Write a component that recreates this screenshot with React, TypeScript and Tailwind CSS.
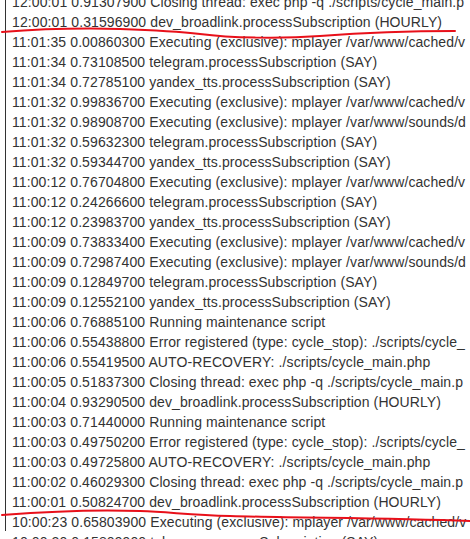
import React from "react";

const rows: string[] = [
  "12:00:01 0.91307900 Closing thread: exec php -q ./scripts/cycle_main.p",
  "12:00:01 0.31596900 dev_broadlink.processSubscription (HOURLY)",
  "11:01:35 0.00860300 Executing (exclusive): mplayer /var/www/cached/v",
  "11:01:34 0.73108500 telegram.processSubscription (SAY)",
  "11:01:34 0.72785100 yandex_tts.processSubscription (SAY)",
  "11:01:32 0.99836700 Executing (exclusive): mplayer /var/www/cached/v",
  "11:01:32 0.98908700 Executing (exclusive): mplayer /var/www/sounds/d",
  "11:01:32 0.59632300 telegram.processSubscription (SAY)",
  "11:01:32 0.59344700 yandex_tts.processSubscription (SAY)",
  "11:00:12 0.76704800 Executing (exclusive): mplayer /var/www/cached/v",
  "11:00:12 0.24266600 telegram.processSubscription (SAY)",
  "11:00:12 0.23983700 yandex_tts.processSubscription (SAY)",
  "11:00:09 0.73833400 Executing (exclusive): mplayer /var/www/cached/v",
  "11:00:09 0.72987400 Executing (exclusive): mplayer /var/www/sounds/d",
  "11:00:09 0.12849700 telegram.processSubscription (SAY)",
  "11:00:09 0.12552100 yandex_tts.processSubscription (SAY)",
  "11:00:06 0.76885100 Running maintenance script",
  "11:00:06 0.55438800 Error registered (type: cycle_stop): ./scripts/cycle_",
  "11:00:06 0.55419500 AUTO-RECOVERY: ./scripts/cycle_main.php",
  "11:00:05 0.51837300 Closing thread: exec php -q ./scripts/cycle_main.p",
  "11:00:04 0.93290500 dev_broadlink.processSubscription (HOURLY)",
  "11:00:03 0.71440000 Running maintenance script",
  "11:00:03 0.49750200 Error registered (type: cycle_stop): ./scripts/cycle_",
  "11:00:03 0.49725800 AUTO-RECOVERY: ./scripts/cycle_main.php",
  "11:00:02 0.46029300 Closing thread: exec php -q ./scripts/cycle_main.p",
  "11:00:01 0.50824700 dev_broadlink.processSubscription (HOURLY)",
  "10:00:23 0.65803900 Executing (exclusive): mplayer /var/www/cached/v",
  "10:00:20 0.15809900 telegram.processSubscription (SAY)",
];

export default function App() {
  return (
    <div className="relative w-[470px] h-[539px] overflow-hidden bg-white">
      <div className="ml-[5px] border-l border-[#333] h-full">
        <div className="-mt-[8px] pl-[6px] text-[14px] leading-[20px] tracking-[0.1px] text-[#333] font-['Liberation_Sans',Arial,sans-serif]">
          {rows.map((r, i) => (
            <div key={i} className="whitespace-nowrap">
              {r}
            </div>
          ))}
        </div>
      </div>

      {/* red marker strokes */}
      <svg
        className="absolute left-0 top-0 pointer-events-none"
        width="470"
        height="539"
        viewBox="0 0 470 539"
      >
        <path
          d="M2 32 C 40 29, 80 28, 120 29 C 150 30, 175 31, 200 34 C 230 38, 280 39, 320 36 C 360 33, 410 31, 455 31"
          fill="none"
          stroke="#e8101a"
          strokeWidth="2"
          strokeLinecap="round"
        />
        <path
          d="M2 515 C 40 512, 90 509, 140 511 C 170 512, 190 515, 230 516 C 300 518, 380 518, 470 521"
          fill="none"
          stroke="#e8101a"
          strokeWidth="2"
          strokeLinecap="round"
        />
      </svg>
    </div>
  );
}
